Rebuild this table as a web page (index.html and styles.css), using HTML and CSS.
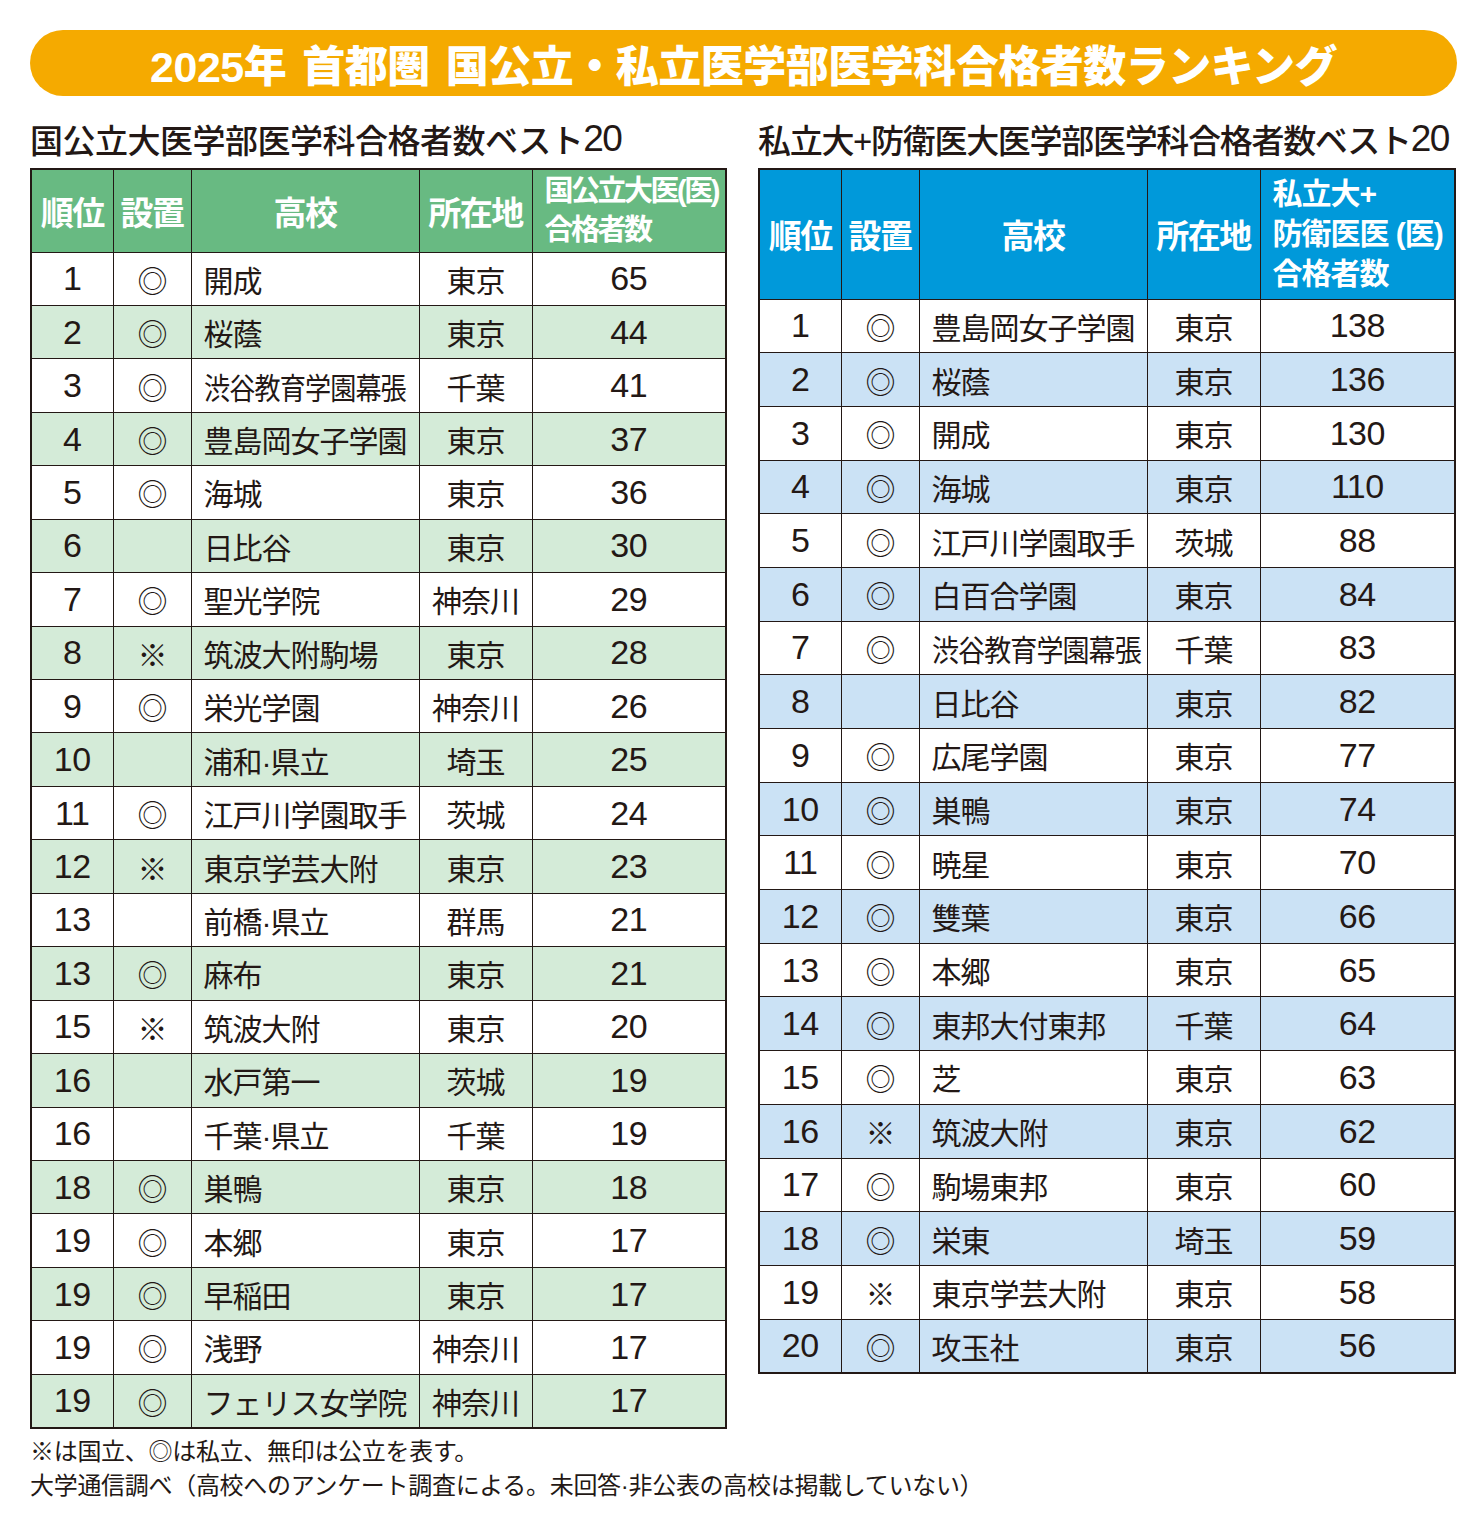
FILE: index.html
```html
<!DOCTYPE html>
<html lang="ja">
<head>
<meta charset="utf-8">
<title>2025年 首都圏 医学部医学科合格者数ランキング</title>
<link rel="stylesheet" href="styles.css">
</head>
<body>
<div class="page">
  <div class="title">2025年<span class="gap"></span>首都圏<span class="gap"></span>国公立・私立医学部医学科合格者数ランキング</div>
  <div class="cols">
    <section class="col">
      <h2 class="sub">国公立大医学部医学科合格者数ベスト<span class="d">20</span></h2>
      <table class="rank green">
        <colgroup><col class="c1"><col class="c2"><col class="c3"><col class="c4"><col class="c5"></colgroup>
        <thead>
          <tr class="head-l"><th>順位</th><th>設置</th><th>高校</th><th>所在地</th><th class="hnum hnum-l">国公立大医(医)<br>合格者数</th></tr>
        </thead>
        <tbody>
          <tr><td class="rk">1</td><td class="mk">◎</td><td class="nm">開成</td><td class="pl">東京</td><td class="num">65</td></tr>
          <tr><td class="rk">2</td><td class="mk">◎</td><td class="nm">桜蔭</td><td class="pl">東京</td><td class="num">44</td></tr>
          <tr><td class="rk">3</td><td class="mk">◎</td><td class="nm"><span class="sq">渋谷教育学園幕張</span></td><td class="pl">千葉</td><td class="num">41</td></tr>
          <tr><td class="rk">4</td><td class="mk">◎</td><td class="nm">豊島岡女子学園</td><td class="pl">東京</td><td class="num">37</td></tr>
          <tr><td class="rk">5</td><td class="mk">◎</td><td class="nm">海城</td><td class="pl">東京</td><td class="num">36</td></tr>
          <tr><td class="rk">6</td><td class="mk"></td><td class="nm">日比谷</td><td class="pl">東京</td><td class="num">30</td></tr>
          <tr><td class="rk">7</td><td class="mk">◎</td><td class="nm">聖光学院</td><td class="pl">神奈川</td><td class="num">29</td></tr>
          <tr><td class="rk">8</td><td class="mk">※</td><td class="nm">筑波大附駒場</td><td class="pl">東京</td><td class="num">28</td></tr>
          <tr><td class="rk">9</td><td class="mk">◎</td><td class="nm">栄光学園</td><td class="pl">神奈川</td><td class="num">26</td></tr>
          <tr><td class="rk">10</td><td class="mk"></td><td class="nm">浦和·県立</td><td class="pl">埼玉</td><td class="num">25</td></tr>
          <tr><td class="rk">11</td><td class="mk">◎</td><td class="nm">江戸川学園取手</td><td class="pl">茨城</td><td class="num">24</td></tr>
          <tr><td class="rk">12</td><td class="mk">※</td><td class="nm">東京学芸大附</td><td class="pl">東京</td><td class="num">23</td></tr>
          <tr><td class="rk">13</td><td class="mk"></td><td class="nm">前橋·県立</td><td class="pl">群馬</td><td class="num">21</td></tr>
          <tr><td class="rk">13</td><td class="mk">◎</td><td class="nm">麻布</td><td class="pl">東京</td><td class="num">21</td></tr>
          <tr><td class="rk">15</td><td class="mk">※</td><td class="nm">筑波大附</td><td class="pl">東京</td><td class="num">20</td></tr>
          <tr><td class="rk">16</td><td class="mk"></td><td class="nm">水戸第一</td><td class="pl">茨城</td><td class="num">19</td></tr>
          <tr><td class="rk">16</td><td class="mk"></td><td class="nm">千葉·県立</td><td class="pl">千葉</td><td class="num">19</td></tr>
          <tr><td class="rk">18</td><td class="mk">◎</td><td class="nm">巣鴨</td><td class="pl">東京</td><td class="num">18</td></tr>
          <tr><td class="rk">19</td><td class="mk">◎</td><td class="nm">本郷</td><td class="pl">東京</td><td class="num">17</td></tr>
          <tr><td class="rk">19</td><td class="mk">◎</td><td class="nm">早稲田</td><td class="pl">東京</td><td class="num">17</td></tr>
          <tr><td class="rk">19</td><td class="mk">◎</td><td class="nm">浅野</td><td class="pl">神奈川</td><td class="num">17</td></tr>
          <tr><td class="rk">19</td><td class="mk">◎</td><td class="nm">フェリス女学院</td><td class="pl">神奈川</td><td class="num">17</td></tr>
        </tbody>
      </table>
    </section>
    <section class="col">
      <h2 class="sub sub-r">私立大+防衛医大医学部医学科合格者数ベスト<span class="d">20</span></h2>
      <table class="rank blue">
        <colgroup><col class="c1"><col class="c2"><col class="c3"><col class="c4"><col class="c5"></colgroup>
        <thead>
          <tr class="head-r"><th>順位</th><th>設置</th><th>高校</th><th>所在地</th><th class="hnum">私立大+<br>防衛医医 (医)<br>合格者数</th></tr>
        </thead>
        <tbody>
          <tr><td class="rk">1</td><td class="mk">◎</td><td class="nm">豊島岡女子学園</td><td class="pl">東京</td><td class="num">138</td></tr>
          <tr><td class="rk">2</td><td class="mk">◎</td><td class="nm">桜蔭</td><td class="pl">東京</td><td class="num">136</td></tr>
          <tr><td class="rk">3</td><td class="mk">◎</td><td class="nm">開成</td><td class="pl">東京</td><td class="num">130</td></tr>
          <tr><td class="rk">4</td><td class="mk">◎</td><td class="nm">海城</td><td class="pl">東京</td><td class="num">110</td></tr>
          <tr><td class="rk">5</td><td class="mk">◎</td><td class="nm">江戸川学園取手</td><td class="pl">茨城</td><td class="num">88</td></tr>
          <tr><td class="rk">6</td><td class="mk">◎</td><td class="nm">白百合学園</td><td class="pl">東京</td><td class="num">84</td></tr>
          <tr><td class="rk">7</td><td class="mk">◎</td><td class="nm"><span class="sq sq-r">渋谷教育学園幕張</span></td><td class="pl">千葉</td><td class="num">83</td></tr>
          <tr><td class="rk">8</td><td class="mk"></td><td class="nm">日比谷</td><td class="pl">東京</td><td class="num">82</td></tr>
          <tr><td class="rk">9</td><td class="mk">◎</td><td class="nm">広尾学園</td><td class="pl">東京</td><td class="num">77</td></tr>
          <tr><td class="rk">10</td><td class="mk">◎</td><td class="nm">巣鴨</td><td class="pl">東京</td><td class="num">74</td></tr>
          <tr><td class="rk">11</td><td class="mk">◎</td><td class="nm">暁星</td><td class="pl">東京</td><td class="num">70</td></tr>
          <tr><td class="rk">12</td><td class="mk">◎</td><td class="nm">雙葉</td><td class="pl">東京</td><td class="num">66</td></tr>
          <tr><td class="rk">13</td><td class="mk">◎</td><td class="nm">本郷</td><td class="pl">東京</td><td class="num">65</td></tr>
          <tr><td class="rk">14</td><td class="mk">◎</td><td class="nm">東邦大付東邦</td><td class="pl">千葉</td><td class="num">64</td></tr>
          <tr><td class="rk">15</td><td class="mk">◎</td><td class="nm">芝</td><td class="pl">東京</td><td class="num">63</td></tr>
          <tr><td class="rk">16</td><td class="mk">※</td><td class="nm">筑波大附</td><td class="pl">東京</td><td class="num">62</td></tr>
          <tr><td class="rk">17</td><td class="mk">◎</td><td class="nm">駒場東邦</td><td class="pl">東京</td><td class="num">60</td></tr>
          <tr><td class="rk">18</td><td class="mk">◎</td><td class="nm">栄東</td><td class="pl">埼玉</td><td class="num">59</td></tr>
          <tr><td class="rk">19</td><td class="mk">※</td><td class="nm">東京学芸大附</td><td class="pl">東京</td><td class="num">58</td></tr>
          <tr><td class="rk">20</td><td class="mk">◎</td><td class="nm">攻玉社</td><td class="pl">東京</td><td class="num">56</td></tr>
        </tbody>
      </table>
    </section>
  </div>
  <div class="notes">
    <p>※は国立、◎は私立、無印は公立を表す。</p>
    <p>大学通信調べ（高校へのアンケート調査による。未回答·非公表の高校は掲載していない）</p>
  </div>
</div>
</body>
</html>
```

FILE: styles.css
```css
* { box-sizing: border-box; }
body {
  margin: 0;
  background: #ffffff;
  color: #231815;
  font-family: "Liberation Sans", "Noto Sans CJK JP", sans-serif;
}
.page {
  padding: 30px 0 0 30px;
  width: 1484px;
}
.title {
  width: 1427px;
  height: 66px;
  border-radius: 33px;
  background: #f5aa00;
  color: #ffffff;
  display: flex;
  align-items: center;
  justify-content: center;
  font-size: 43px;
  font-weight: 900;
  letter-spacing: -0.5px;
  white-space: nowrap;
}
.title .gap {
  display: inline-block;
  width: 16px;
}
.cols {
  display: grid;
  grid-template-columns: 697px 698px;
  column-gap: 31px;
  align-items: start;
}
.sub {
  margin: 0;
  height: 72px;
  padding-top: 14px;
  display: flex;
  align-items: center;
  font-size: 33px;
  font-weight: 500;
  letter-spacing: -0.5px;
  white-space: nowrap;
}
.sub .d {
  font-size: 37px;
  letter-spacing: -1.5px;
}
.sub-r { letter-spacing: -1.3px; }
.rank {
  width: 100%;
  table-layout: fixed;
  border-collapse: collapse;
  border: 2.5px solid #231815;
}
.rank th, .rank td {
  border: 1.5px solid #231815;
  padding: 0;
  vertical-align: middle;
  white-space: nowrap;
}
.c1 { width: 82px; }
.c2 { width: 78px; }
.c3 { width: 228px; }
.c4 { width: 113px; }
.rank th {
  color: #ffffff;
  font-weight: 700;
  font-size: 33px;
  letter-spacing: -1.5px;
  text-align: center;
}
.rank th.hnum {
  text-align: left;
  padding-left: 12px;
  font-size: 30px;
  line-height: 40px;
  letter-spacing: -1px;
}
.rank th.hnum-l {
  font-size: 29px;
  letter-spacing: -2.5px;
  line-height: 39px;
}
.head-l { height: 83px; }
.head-r { height: 130px; }
.green thead tr { background: #68ba82; }
.blue thead tr { background: #0099da; }
.green tbody tr:nth-child(even) { background: #d4ebd8; }
.blue tbody tr:nth-child(even) { background: #cbe2f5; }
.green tbody tr { height: 53.45px; }
.blue tbody tr { height: 53.7px; }
.rank td {
  font-size: 30px;
  letter-spacing: -1px;
}
.rk, .num {
  text-align: center;
  font-size: 34px !important;
  letter-spacing: -0.5px !important;
}
.mk { text-align: center; }
.nm { padding-left: 12px !important; }
.sq {
  display: inline-block;
  transform: scaleX(0.87);
  transform-origin: left center;
}
.sq-r { transform: scaleX(0.9); }
.pl { text-align: center; }
.notes {
  padding-top: 6px;
}
.notes p {
  margin: 0;
  font-size: 24px;
  line-height: 34px;
  letter-spacing: -0.3px;
  white-space: nowrap;
}
```
